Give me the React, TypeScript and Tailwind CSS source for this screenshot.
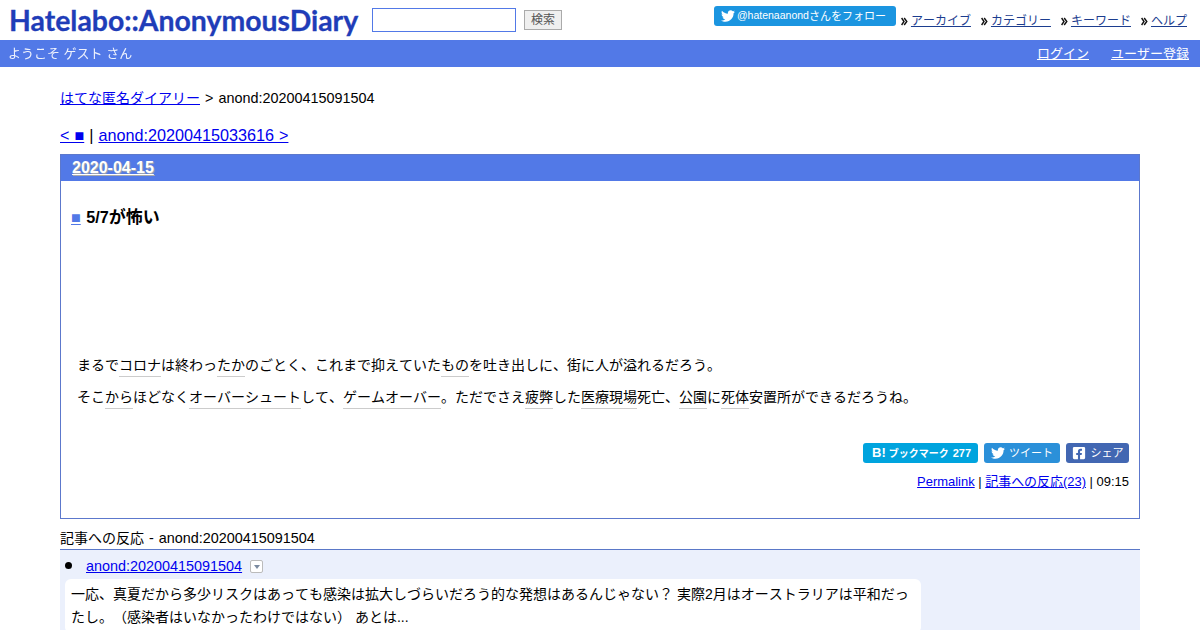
import React from 'react';
import { FaTwitter, FaFacebookSquare } from 'react-icons/fa';

const Kw = ({ children }: { children: React.ReactNode }) => (
  <span className="border-b border-[#cccccc] pb-[3px]">{children}</span>
);

const NavLink = ({ label }: { label: string }) => (
  <span className="flex items-center">
    <svg width="7" height="9" viewBox="0 0 7 9" className="mr-[3px]" fill="none" stroke="#111" strokeWidth="1.4">
      <path d="M0.6 1 L3 4.5 L0.6 8" />
      <path d="M3.2 1 L5.8 4.5 L3.2 8" />
    </svg>
    <a href="#" className="text-[12px] text-[#1c3d8f] underline">{label}</a>
  </span>
);

export default function App() {
  return (
    <div className="h-[630px] overflow-hidden bg-white text-black text-[14.4px] [font-kerning:none] [text-spacing-trim:space-all] font-['Liberation_Sans','Noto_Sans_CJK_JP',sans-serif]">
      {/* Header */}
      <header className="flex h-10 justify-between">
        <div className="flex items-center pl-[9px]">
          <h1 className="w-[349px] text-[28.4px] leading-none font-bold whitespace-nowrap text-[#1f3db8] [font-kerning:normal] [-webkit-text-stroke:0.3px_#1f3db8] font-['Lato',sans-serif]">Hatelabo::AnonymousDiary</h1>
          <input className="ml-[14px] h-6 w-[144px] border border-[#5279e7] bg-white" />
          <button className="ml-2 h-5 w-[38px] border border-[#aaaaaa] bg-[#efefef] text-[12px] text-[#555555]">検索</button>
        </div>
        <div className="flex items-start pr-[13px] pt-[6px]">
          <a href="#" className="flex h-5 w-[182px] items-center rounded-[3px] bg-[#1b95e0] pl-[7px] text-[11px] text-white">
            <FaTwitter className="mr-[2px] text-[14px]" />
            <span className="text-[10.5px]">@hatenaanond</span>さんをフォロー
          </a>
          <nav className="ml-[5px] flex gap-[10px] pt-[6px]">
            <NavLink label="アーカイブ" />
            <NavLink label="カテゴリー" />
            <NavLink label="キーワード" />
            <NavLink label="ヘルプ" />
          </nav>
        </div>
      </header>

      <div className="flex h-[27px] items-center justify-between bg-[#5279e7] pl-2 pr-[11px] text-[13px] text-white">
        <span className="opacity-90">ようこそ ゲスト さん</span>
        <span className="flex gap-[22px]">
          <a href="#" className="underline">ログイン</a>
          <a href="#" className="underline">ユーザー登録</a>
        </span>
      </div>

      {/* Main */}
      <main className="px-[60px]">
        <p className="mt-[21px] leading-5 [word-spacing:1px]">
          <a href="#" className="text-[14px] text-[#0000ee] underline">はてな匿名ダイアリー</a> &gt; anond:20200415091504
        </p>
        <p className="mt-[17px] text-[16.2px] leading-5 [word-spacing:0.5px]">
          <a href="#" className="text-[#0000ee] underline">&lt; ■</a> | <a href="#" className="text-[#0000ee] underline">anond:20200415033616 &gt;</a>
        </p>

        <section className="mt-[9px] h-[365px] border border-[#5c78cc]">
          <h2 className="flex h-[26px] items-center bg-[#5279e7] pl-[11px] text-[16px] font-bold text-white [text-shadow:1px_1px_1px_#aaaaaa]">
            <a href="#" className="underline">2020-04-15</a>
          </h2>
          <h3 className="mt-[26px] pl-[10px] text-[16.2px] leading-5 font-bold [word-spacing:1px]">
            <a href="#" className="text-[#5279e7] underline">■</a> 5/7<span className="text-[17px]">が怖い</span>
          </h3>
          <div className="mt-[127px] pl-4 text-[14px]">
            <p className="leading-5">
              まるで<Kw>コロナ</Kw>は終わっ<Kw>たか</Kw>のごとく、これまで抑えていた<Kw>もの</Kw>を吐き出しに、街に人が溢れるだろう。
            </p>
            <p className="mt-3 leading-5">
              そこ<Kw>から</Kw>ほどなく<Kw>オーバーシュート</Kw>して、<Kw>ゲームオーバー</Kw>。ただでさえ<Kw>疲弊</Kw>した<Kw>医療現場</Kw>死亡、<Kw>公園</Kw>に<Kw>死体</Kw>安置所ができるだろうね。
            </p>
          </div>
          <div className="mt-[36px] flex justify-end gap-[6px] pr-[10px] text-[11px] text-white">
            <a href="#" className="flex h-5 w-[115px] items-center whitespace-nowrap rounded-[3px] bg-[#00a4de] pl-[9px] font-bold">
              <span className="text-[13px] font-bold">B!</span>
              <span className="ml-[3px] text-[10px]">ブックマーク</span>
              <span className="ml-[4px]">277</span>
            </a>
            <a href="#" className="flex h-5 w-[76px] items-center justify-center gap-1 rounded-[3px] bg-[#2b90d9]">
              <FaTwitter className="text-[14px]" />ツイート
            </a>
            <a href="#" className="flex h-5 w-[63px] items-center justify-center gap-[5px] rounded-[3px] bg-[#4267b2]">
              <FaFacebookSquare className="text-[14px]" />シェア
            </a>
          </div>
          <p className="mt-[9px] pr-[10px] text-right text-[12.96px] leading-5">
            <a href="#" className="text-[#0000ee] underline">Permalink</a> | <a href="#" className="text-[#0000ee] underline">記事への反応(23)</a> | 09:15
          </p>
        </section>

        <p className="mt-[9px] h-[21px] leading-5 [word-spacing:1px]">
          <span className="text-[14px]">記事への反応</span> - anond:20200415091504
        </p>
        <div className="h-[81px] border-t border-[#5a78c8] bg-[#ebf0fc] pl-[5px]">
          <div className="flex h-[29px] items-center pt-1">
            <span className="mb-[2px] h-[7px] w-[7px] rounded-full bg-black" />
            <a href="#" className="ml-[14px] text-[#0000ee] underline">anond:20200415091504</a>
            <span className="ml-2 flex h-[13px] w-[13px] items-center justify-center rounded-[2px] border border-[#bbbbbb] bg-white">
              <span className="h-0 w-0 border-x-[3px] border-t-[4px] border-x-transparent border-t-[#7a8aa0]" />
            </span>
          </div>
          <div className="w-[856px] rounded-md bg-white px-[6px] py-1 text-[14px] leading-[23px]">
            一応、真夏だから多少リスクはあっても感染は拡大しづらいだろう的な発想はあるんじゃない？ 実際2月はオーストラリアは平和だったし。（感染者はいなかったわけではない） あとは...
          </div>
        </div>
      </main>
    </div>
  );
}
